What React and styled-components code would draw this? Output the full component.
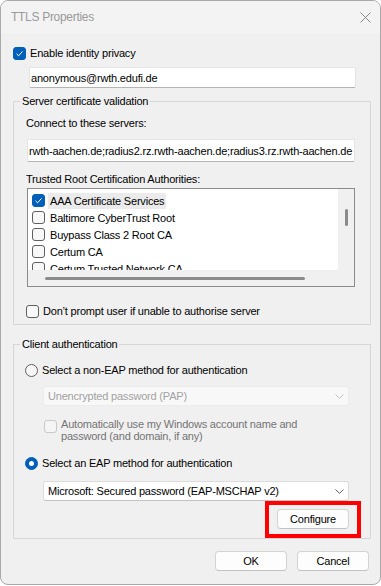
import styled, { createGlobalStyle } from "styled-components";

const GlobalStyle = createGlobalStyle`
  html, body {
    margin: 0;
    padding: 0;
    background: #ffffff;
  }
  body {
    font-family: "Liberation Sans", Arial, sans-serif;
    font-size: 11px;
    letter-spacing: -0.2px;
    color: #000000;
  }
  * {
    box-sizing: border-box;
  }
`;

const Window = styled.div`
  width: 381px;
  height: 585px;
  border: 1px solid #a9a9a9;
  border-radius: 8px;
  background: #f0f0f0;
  overflow: hidden;
  display: flex;
  flex-direction: column;
`;

const TitleBar = styled.div`
  height: 32px;
  flex: none;
  display: flex;
  align-items: center;
  padding: 0 9px 0 10px;
  background: #f3f3f3;
  color: #9a9a9a;
  font-size: 12px;
  letter-spacing: -0.3px;
`;

const CloseIcon = styled.svg`
  margin-left: auto;
  width: 11px;
  height: 11px;
`;

const Body = styled.div`
  display: flex;
  flex-direction: column;
  padding: 0 9px 0 12px;
`;

const CheckRow = styled.label`
  display: flex;
  align-items: ${(p) => (p.$top ? "flex-start" : "center")};
  gap: 4px;
  margin-top: ${(p) => p.$mt || 0}px;
  margin-left: ${(p) => p.$ml || 0}px;
  line-height: ${(p) => p.$lh || 14}px;
  color: ${(p) => (p.$disabled ? "#747474" : "#000000")};
`;

const Box = styled.span`
  flex: none;
  width: 13px;
  height: 13px;
  border-radius: 3px;
  display: inline-flex;
  align-items: center;
  justify-content: center;
  margin-top: ${(p) => p.$mt || 0}px;
  background: ${(p) => (p.$checked ? "#005fb8" : p.$disabled ? "#f5f5f5" : "#f8f8f8")};
  border: 1px solid
    ${(p) => (p.$checked ? "#005fb8" : p.$disabled ? "#c9c9c9" : "#5f5f5f")};
`;

const Radio = styled.span`
  flex: none;
  width: 13px;
  height: 13px;
  border-radius: 50%;
  margin-left: -1px;
  display: inline-flex;
  align-items: center;
  justify-content: center;
  background: ${(p) => (p.$checked ? "#005fb8" : "#f6f6f6")};
  border: 1px solid ${(p) => (p.$checked ? "#005fb8" : "#5f5f5f")};

  &::after {
    content: "";
    display: ${(p) => (p.$checked ? "block" : "none")};
    width: 5px;
    height: 5px;
    border-radius: 50%;
    background: #ffffff;
  }
`;

const TextBox = styled.div`
  height: ${(p) => p.$h || 21}px;
  width: ${(p) => p.$w}px;
  margin-top: ${(p) => p.$mt || 0}px;
  margin-left: ${(p) => p.$ml || 0}px;
  background: #ffffff;
  border: 1px solid #e4e4e4;
  border-bottom-color: #b4b4b4;
  border-radius: 2px;
  padding: 0 1px;
  display: flex;
  align-items: center;
  white-space: nowrap;
  overflow: hidden;
`;

const Group = styled.fieldset`
  margin: ${(p) => p.$mt || 0}px 0 0 0;
  padding: 0 10px ${(p) => p.$pb || 6}px 12px;
  border: 1px solid #d6d6d6;
  min-width: 0;
  display: flex;
  flex-direction: column;
`;

const Legend = styled.legend`
  padding: 0 2px;
  margin-left: -6px;
  line-height: 14px;
`;

const Caption = styled.div`
  line-height: 14px;
  margin-top: ${(p) => p.$mt || 0}px;
`;

const ListBox = styled.div`
  width: 328px;
  height: 99px;
  margin-top: ${(p) => p.$mt || 0}px;
  margin-left: 1px;
  border: 1px solid #8a8a8a;
  background: #f0f0f0;
  display: grid;
  grid-template-columns: 1fr 16px;
  grid-template-rows: 1fr 16px;
`;

const ListItems = styled.div`
  background: #ffffff;
  overflow: hidden;
  padding: 3px 0 0 4px;
  border-bottom-right-radius: 3px;
`;

const ListRow = styled.div`
  height: 17px;
  display: flex;
  align-items: center;
  gap: 3px;
  white-space: nowrap;
`;

const ItemLabel = styled.span`
  padding: 0 2px;
  line-height: 16px;
  background: ${(p) => (p.$selected ? "#ebebeb" : "transparent")};
`;

const VScroll = styled.div`
  padding: 20px 0 0 7px;
`;

const VThumb = styled.div`
  width: 3px;
  height: 17px;
  border-radius: 2px;
  background: #8b8b8b;
`;

const HScroll = styled.div`
  padding: 7px 0 0 17px;
`;

const HThumb = styled.div`
  width: 260px;
  height: 3px;
  border-radius: 2px;
  background: #8b8b8b;
`;

const Select = styled.div`
  height: 20px;
  width: 306px;
  margin-top: ${(p) => p.$mt || 0}px;
  margin-left: ${(p) => p.$ml || 0}px;
  display: flex;
  align-items: center;
  justify-content: space-between;
  padding: 0 4px 0 4px;
  border-radius: 3px;
  background: ${(p) => (p.$disabled ? "#f8f8f8" : "#ffffff")};
  border: 1px solid ${(p) => (p.$disabled ? "#ececec" : "#dcdcdc")};
  border-bottom-color: ${(p) => (p.$disabled ? "#ececec" : "#c4c4c4")};
  color: ${(p) => (p.$disabled ? "#a2a2a2" : "#000000")};
  white-space: nowrap;
`;

const Chevron = styled.svg`
  width: 9px;
  height: 5px;
  flex: none;
`;

const EapBlock = styled.div`
  display: flex;
  flex-direction: column;
  align-items: flex-end;
  width: 306px;
  margin-left: 17px;
`;

const ButtonSlot = styled.div`
  position: relative;
  margin-top: ${(p) => p.$mt || 0}px;
`;

const Highlight = styled.div`
  position: absolute;
  top: -8px;
  left: -12px;
  right: -12px;
  bottom: -9px;
  border: 4px solid #ff0000;
  pointer-events: none;
`;

const Button = styled.button`
  width: 72px;
  height: 20px;
  padding: 0;
  font: inherit;
  letter-spacing: inherit;
  color: #000000;
  background: #fdfdfd;
  border: 1px solid #d3d3d3;
  border-bottom-color: #c2c2c2;
  border-radius: 4px;
`;

const Footer = styled.div`
  display: flex;
  justify-content: flex-end;
  gap: 10px;
  margin-top: 12px;
  padding-right: 2px;
`;

const Tick = () => (
  <svg width="9" height="9" viewBox="0 0 9 9">
    <polyline
      points="1.5,4.8 3.6,6.8 7.5,2.4"
      fill="none"
      stroke="#ffffff"
      strokeWidth="1"
    />
  </svg>
);

const Down = ({ color }) => (
  <Chevron viewBox="0 0 9 5">
    <polyline points="0.5,0.5 4.5,4.3 8.5,0.5" fill="none" stroke={color} strokeWidth="1" />
  </Chevron>
);

const authorities = [
  "AAA Certificate Services",
  "Baltimore CyberTrust Root",
  "Buypass Class 2 Root CA",
  "Certum CA",
  "Certum Trusted Network CA",
];

export default function App() {
  return (
    <>
      <GlobalStyle />
      <Window>
        <TitleBar>
          <span>TTLS Properties</span>
          <CloseIcon viewBox="0 0 11 11">
            <line x1="0.5" y1="0.5" x2="10.5" y2="10.5" stroke="#8a8a8a" strokeWidth="1" />
            <line x1="10.5" y1="0.5" x2="0.5" y2="10.5" stroke="#8a8a8a" strokeWidth="1" />
          </CloseIcon>
        </TitleBar>

        <Body>
          <CheckRow $mt={13}>
            <Box $checked>
              <Tick />
            </Box>
            Enable identity privacy
          </CheckRow>
          <TextBox $w={327} $ml={16} $mt={7}>
            anonymous@rwth.edufi.de
          </TextBox>

          <Group $mt={6}>
            <Legend>Server certificate validation</Legend>
            <Caption $mt={8}>Connect to these servers:</Caption>
            <TextBox $w={328} $ml={1} $mt={9} $h={23}>
              rwth-aachen.de;radius2.rz.rwth-aachen.de;radius3.rz.rwth-aachen.de
            </TextBox>
            <Caption $mt={10}>Trusted Root Certification Authorities:</Caption>
            <ListBox $mt={2}>
              <ListItems>
                {authorities.map((name, i) => (
                  <ListRow key={name}>
                    <Box $checked={i === 0}>{i === 0 ? <Tick /> : null}</Box>
                    <ItemLabel $selected={i === 0}>{name}</ItemLabel>
                  </ListRow>
                ))}
              </ListItems>
              <VScroll>
                <VThumb />
              </VScroll>
              <HScroll>
                <HThumb />
              </HScroll>
              <div />
            </ListBox>
            <CheckRow $mt={17}>
              <Box />
              Don’t prompt user if unable to authorise server
            </CheckRow>
          </Group>

          <Group $mt={12} $pb={9}>
            <Legend>Client authentication</Legend>
            <CheckRow $mt={12}>
              <Radio />
              Select a non-EAP method for authentication
            </CheckRow>
            <Select $disabled $ml={17} $mt={9}>
              <span>Unencrypted password (PAP)</span>
              <Down color="#c2c2c2" />
            </Select>
            <CheckRow $disabled $top $lh={12} $ml={18} $mt={12}>
              <Box $disabled $mt={2} />
              <span>
                Automatically use my Windows account name and
                <br />
                password (and domain, if any)
              </span>
            </CheckRow>
            <CheckRow $mt={14}>
              <Radio $checked />
              Select an EAP method for authentication
            </CheckRow>
            <EapBlock>
              <Select $mt={11}>
                <span>Microsoft: Secured password (EAP-MSCHAP v2)</span>
                <Down color="#5c5c5c" />
              </Select>
              <ButtonSlot $mt={8}>
                <Button type="button">Configure</Button>
                <Highlight />
              </ButtonSlot>
            </EapBlock>
          </Group>

          <Footer>
            <Button type="button">OK</Button>
            <Button type="button">Cancel</Button>
          </Footer>
        </Body>
      </Window>
    </>
  );
}
